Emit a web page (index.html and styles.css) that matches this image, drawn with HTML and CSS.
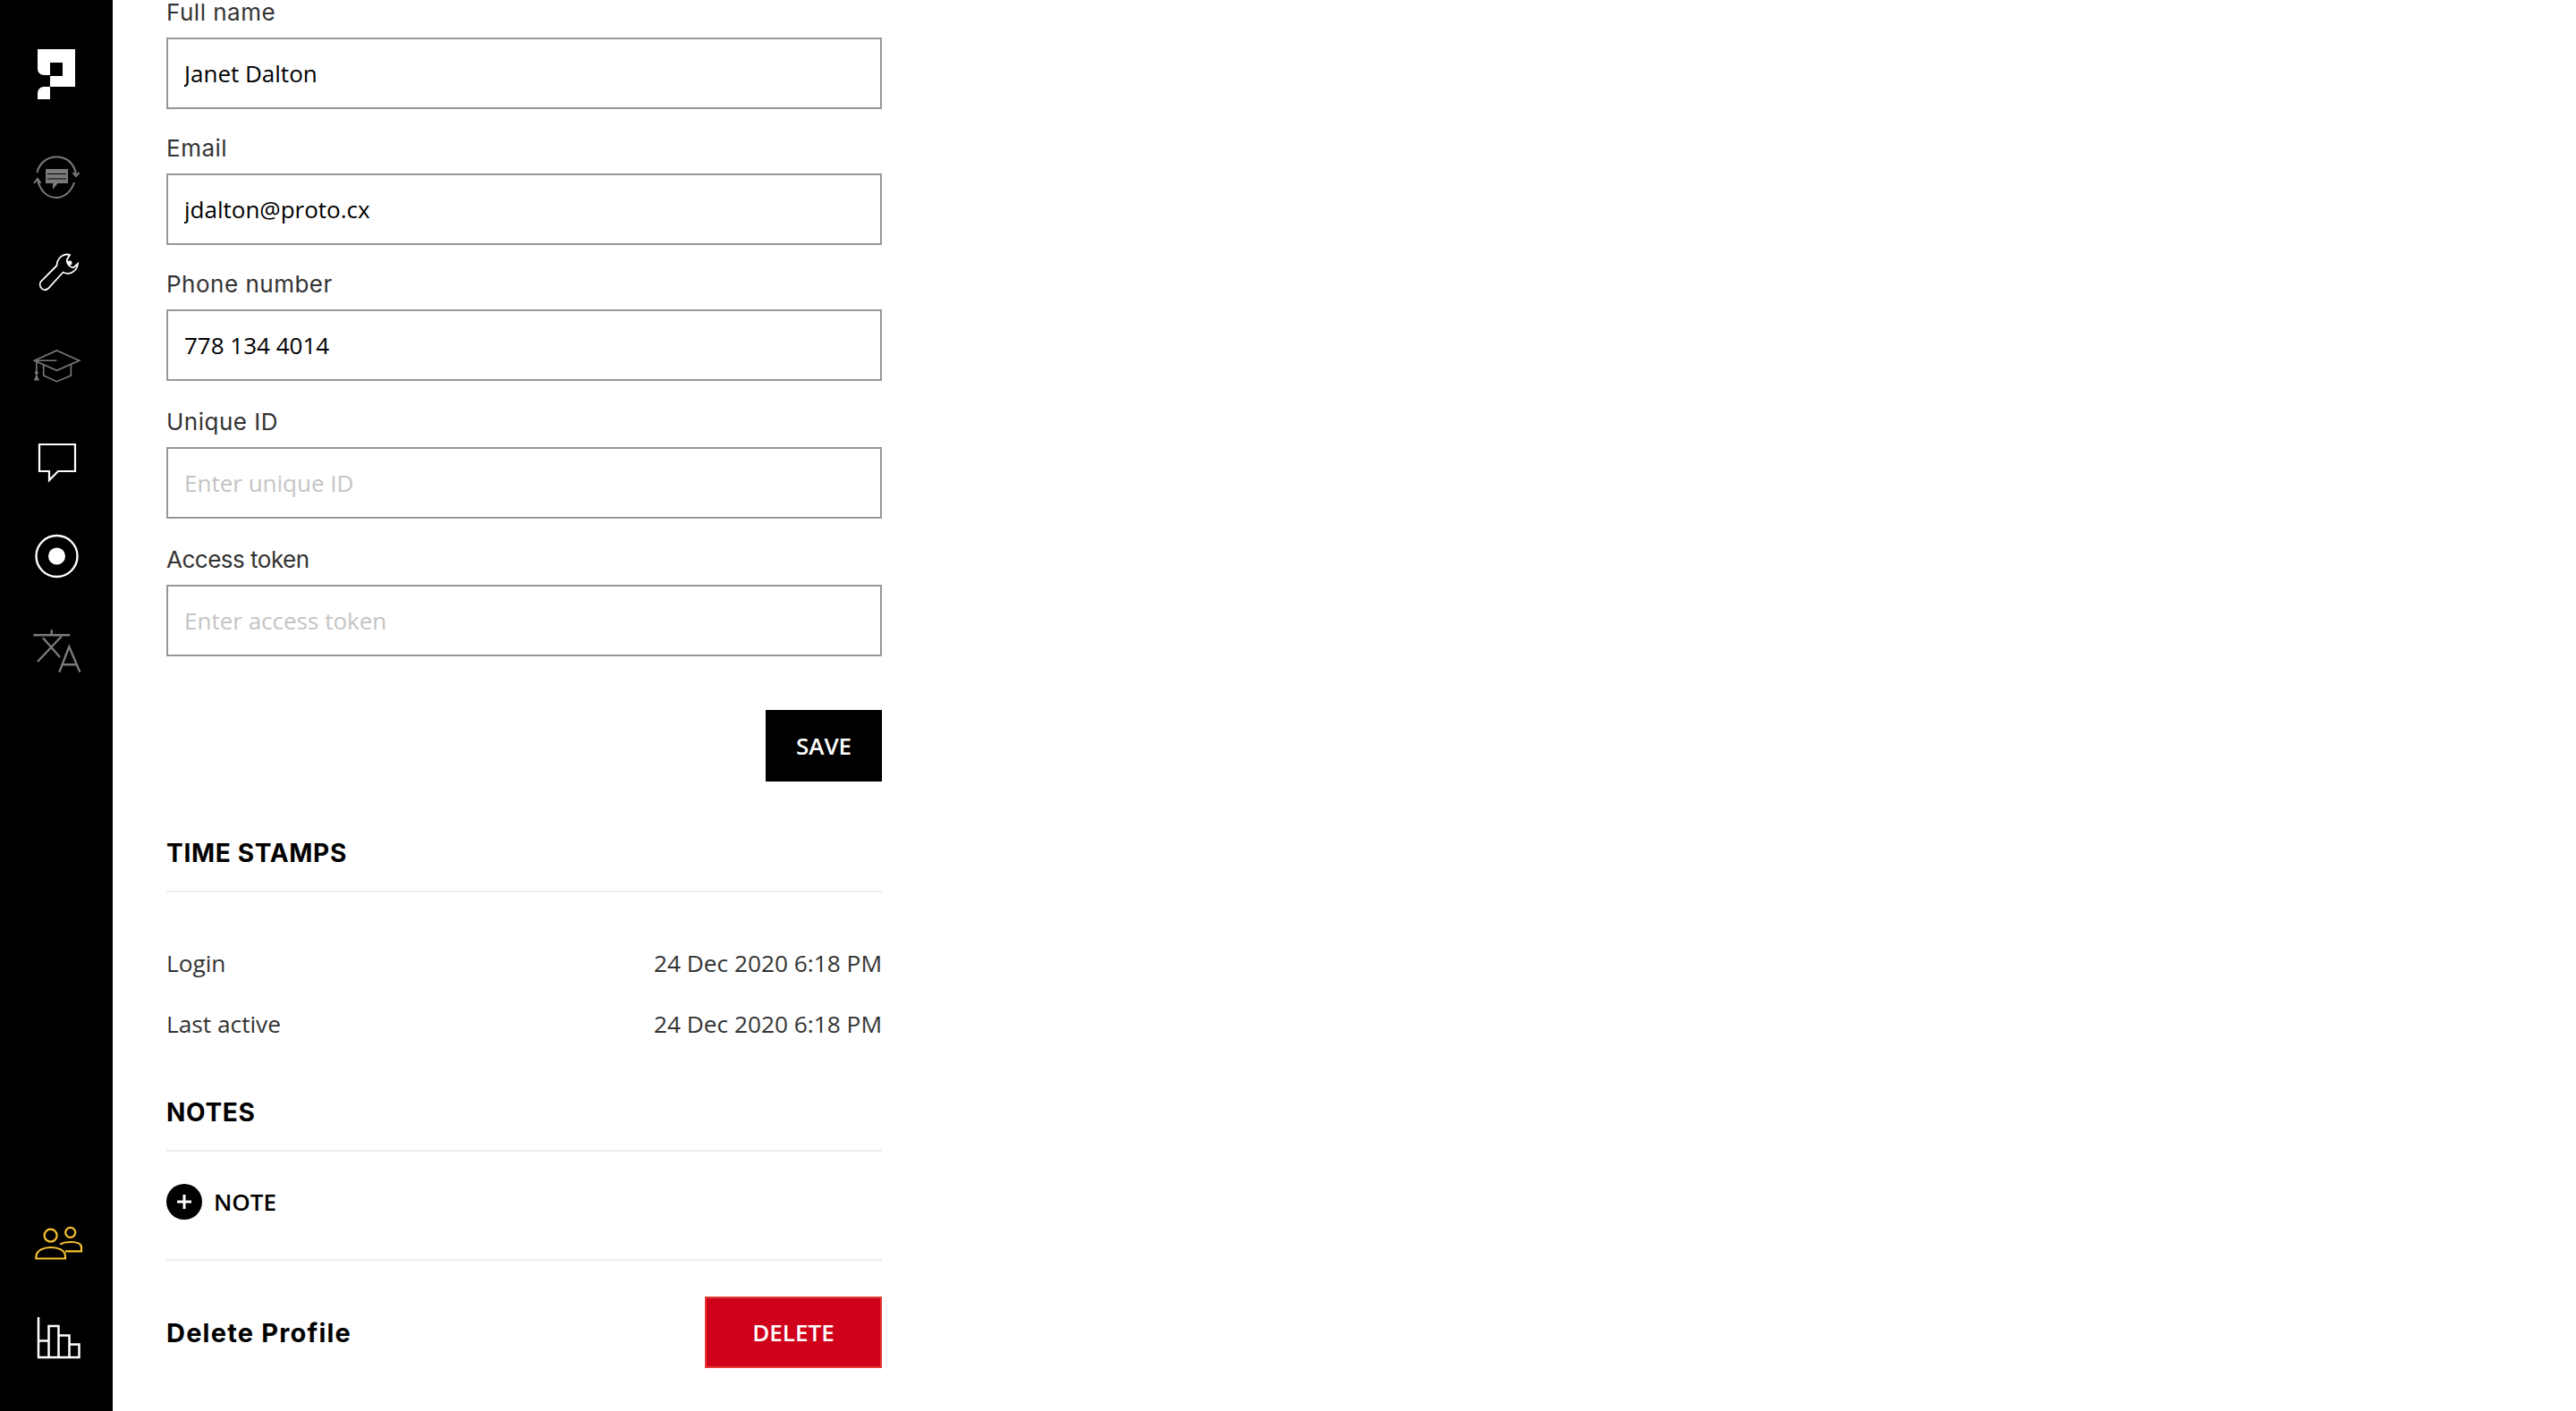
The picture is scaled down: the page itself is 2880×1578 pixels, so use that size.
FILE: index.html
```html
<!DOCTYPE html>
<html lang="en">
<head>
    <meta charset="UTF-8">
    <title>Profile</title>
    <link rel="stylesheet" href="styles.css">
</head>
<body>
    <!-- Sidebar -->
    <aside class="sidebar">
        <div class="nav-group">
            <div class="logo">
                <svg width="42" height="56" viewBox="0 0 42 56"><path fill="#fff" d="M0 0H42V42H14V30H28V15H14V29H7A7 7 0 0 1 0 22Z"/><path fill="#fff" d="M14 42V56H0V49A7 7 0 0 1 7 42Z"/></svg>
            </div>
            <a class="nav-item" href="#">
                <svg viewBox="0 0 60 60" fill="none" stroke="#7a7a7a" stroke-width="2"><path d="M8.500 25C11 14 20 7.500 30 7.500C41 7.500 50 14 52 27"/><path d="M48.500 25L52 29L55.500 25"/><path d="M50 36C47 46 39 53 30 53C20 53 12 46 9 33"/><path d="M5 37L9 32L12.500 37"/><path fill="#7a7a7a" stroke="none" d="M18 21H43V37H31.500L26 44V37H18Z"/><path stroke="#000" stroke-width="1.200" d="M20 26.500H41M20 32H41"/></svg>
            </a>
            <a class="nav-item" href="#">
                <svg viewBox="0 0 60 60" fill="none" stroke="#fff" stroke-width="1.800"><path d="M45 11C38 9 31 14 30.500 23L13 40.500C9 45 15 54 21 48.500L37.500 30.500C44 34 53 30 54 21L49.500 25C46 26 41 21 42 16Z"/><circle cx="45" cy="20" r="2.500" fill="#fff" stroke="none"/></svg>
            </a>
            <a class="nav-item" href="#">
                <svg viewBox="0 0 60 60" fill="none" stroke="#7a7a7a" stroke-width="1.600"><path d="M30.500 12L55.700 23.300L30.500 34.300L5.300 23.300Z"/><path d="M15.700 27V40L30.500 46.700L46.400 40V27"/><path d="M7.800 23.300H30.500M7.800 23.300V36"/><circle cx="7.800" cy="37" r="2" fill="#7a7a7a" stroke="none"/><path fill="#7a7a7a" stroke="none" d="M7.800 38L11 45.500H4.800Z"/></svg>
            </a>
            <a class="nav-item" href="#">
                <svg viewBox="0 0 60 60" fill="none" stroke="#fff" stroke-width="2.200"><path d="M11 11H51V41H32L22 51V41H11Z"/></svg>
            </a>
            <a class="nav-item" href="#">
                <svg viewBox="0 0 60 60" fill="none" stroke="#fff" stroke-width="2.400"><circle cx="30.500" cy="30" r="23"/><circle cx="30.500" cy="30" r="9.500" fill="#fff" stroke="none"/></svg>
            </a>
            <a class="nav-item" href="#">
                <svg viewBox="0 0 60 60" fill="none" stroke="#7a7a7a" stroke-width="2.400"><path d="M4.300 12.300H45.300M24.700 6.300V12.300M15 15.300L34 37M35.700 13.700L9 42"/><path d="M33.300 53.700L44.300 25.300L56.400 53.700M35.700 45.300H53"/></svg>
            </a>
        </div>
        <div class="nav-group">
            <a class="nav-item" href="#">
                <svg viewBox="0 0 60 60" fill="none" stroke="#f7c331" stroke-width="2.200"><circle cx="23.600" cy="21.700" r="7"/><path d="M7.400 47.500H40V45C40 38 32 35 24 35C16 35 8 38 7.400 45Z"/><circle cx="45.700" cy="18.300" r="5.500"/><path d="M34.300 31.700C38 29 42 29 47 29C53 29 58 31 58 35V39.300H40"/></svg>
            </a>
            <a class="nav-item" href="#">
                <svg viewBox="0 0 60 60" fill="none" stroke="#fff" stroke-width="2.500"><path d="M10 7V52H55.500V37.500H44.500M10 33.500H21.500M21.500 52V17H32.500V52M32.500 27.500H44.500V52"/></svg>
            </a>
        </div>
    </aside>

    <!-- Main Content -->
    <main class="content">
        <form class="profile-form">
            <div class="field">
                <label for="full-name">Full name</label>
                <input type="text" id="full-name" value="Janet Dalton">
            </div>
            <div class="field">
                <label for="email">Email</label>
                <input type="text" id="email" value="jdalton@proto.cx">
            </div>
            <div class="field">
                <label for="phone">Phone number</label>
                <input type="text" id="phone" value="778 134 4014">
            </div>
            <div class="field field-spaced">
                <label for="unique-id">Unique ID</label>
                <input type="text" id="unique-id" placeholder="Enter unique ID">
            </div>
            <div class="field field-spaced">
                <label for="access-token" class="label-tight">Access token</label>
                <input type="text" id="access-token" placeholder="Enter access token">
            </div>
            <div class="form-actions">
                <button type="button" class="btn btn-save">SAVE</button>
            </div>
        </form>

        <section class="time-stamps">
            <h2>TIME STAMPS</h2>
            <div class="stamp-row"><span>Login</span><span>24 Dec 2020 6:18 PM</span></div>
            <div class="stamp-row"><span>Last active</span><span>24 Dec 2020 6:18 PM</span></div>
        </section>

        <section class="notes">
            <h2>NOTES</h2>
            <div class="add-note">
                <span class="add-icon">
                    <svg width="40" height="40" viewBox="0 0 40 40"><circle cx="20" cy="20" r="20" fill="#000"/><path d="M20 12V28M12 20H28" stroke="#fff" stroke-width="3"/></svg>
                </span>
                <span>NOTE</span>
            </div>
        </section>

        <div class="delete-row">
            <strong>Delete Profile</strong>
            <button type="button" class="btn btn-delete">DELETE</button>
        </div>
    </main>
</body>
</html>
```

FILE: styles.css
```css
/* General Reset */
* {
    margin: 0;
    padding: 0;
    box-sizing: border-box;
}

body {
    display: flex;
    height: 1578px;
    overflow: hidden;
    background: #fff;
    color: #000;
    font-family: 'Open Sans', sans-serif;
}

/* Sidebar */
.sidebar {
    width: 126px;
    flex-shrink: 0;
    background: #000;
    display: flex;
    flex-direction: column;
    justify-content: space-between;
    padding-top: 55px;
    padding-bottom: 29px;
}

.logo {
    display: flex;
    justify-content: center;
    height: 90px;
}

.nav-item {
    display: flex;
    height: 106px;
    align-items: center;
    padding-left: 33px;
}

.nav-item svg {
    width: 60px;
    height: 60px;
}

/* Main Content */
.content {
    width: 860px;
    padding-left: 60px;
}

.field {
    margin-bottom: 30px;
}

.field-spaced {
    margin-top: 32px;
}

.field label {
    display: block;
    height: 42px;
    font-family: 'Inter', sans-serif;
    font-size: 26px;
    line-height: 28px;
    letter-spacing: 0.5px;
    color: #333;
}

.field .label-tight {
    letter-spacing: -0.5px;
}

.field input {
    display: block;
    width: 800px;
    height: 80px;
    padding: 0 18px;
    border: 2px solid #979797;
    border-radius: 0;
    font-family: 'Open Sans', sans-serif;
    font-size: 26px;
    color: #000;
    outline: none;
}

.field input::placeholder {
    color: #c4c4c4;
}

.form-actions {
    display: flex;
    justify-content: flex-end;
    margin-top: 60px;
}

.btn {
    height: 80px;
    border: none;
    color: #fff;
    font-family: 'Open Sans', sans-serif;
    font-size: 26px;
    font-weight: 600;
    cursor: pointer;
}

.btn-save {
    width: 130px;
    background: #000;
}

.btn-delete {
    width: 198px;
    background: #d0021b;
    border: 2px solid #e53935;
}

/* Sections */
h2 {
    font-family: 'Inter', sans-serif;
    font-size: 28px;
    font-weight: 700;
    line-height: 34px;
    letter-spacing: 0.7px;
    padding-bottom: 25px;
    border-bottom: 2px solid #eee;
}

.time-stamps {
    margin-top: 63px;
    padding-bottom: 32px;
}

.time-stamps h2 {
    margin-bottom: 61px;
}

.stamp-row {
    display: flex;
    justify-content: space-between;
    height: 68px;
    font-size: 26.250px;
    line-height: 36px;
    color: #333;
}

.add-note {
    display: flex;
    align-items: center;
    gap: 13px;
    height: 122px;
    padding-bottom: 8px;
    border-bottom: 2px solid #eee;
    font-size: 26px;
    font-weight: 600;
}

.add-icon {
    display: flex;
}

.delete-row {
    display: flex;
    justify-content: space-between;
    align-items: center;
    margin-top: 40px;
}

.delete-row strong {
    font-family: 'Inter', sans-serif;
    font-size: 29px;
    font-weight: 700;
    letter-spacing: 1.200px;
}
```
